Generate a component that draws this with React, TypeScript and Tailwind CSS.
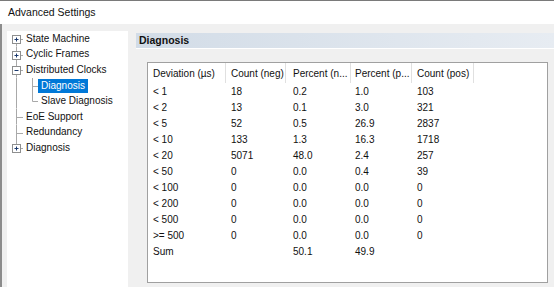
import React from 'react';

type Node = {
  label: string;
  level: 0 | 1;
  box?: 'plus' | 'minus';
  selected?: boolean;
  // vertical line through level-0 column: 'full' | 'down' | 'up'
  trunk: 'full' | 'down' | 'up';
  // child connector at level 1
  branch?: 'full' | 'up';
};

const tree: Node[] = [
  { label: 'State Machine', level: 0, box: 'plus', trunk: 'down' },
  { label: 'Cyclic Frames', level: 0, box: 'plus', trunk: 'full' },
  { label: 'Distributed Clocks', level: 0, box: 'minus', trunk: 'full' },
  { label: 'Diagnosis', level: 1, selected: true, trunk: 'full', branch: 'full' },
  { label: 'Slave Diagnosis', level: 1, trunk: 'full', branch: 'up' },
  { label: 'EoE Support', level: 0, trunk: 'full' },
  { label: 'Redundancy', level: 0, trunk: 'full' },
  { label: 'Diagnosis', level: 0, box: 'plus', trunk: 'up' },
];

const rows: string[][] = [
  ['< 1', '18', '0.2', '1.0', '103'],
  ['< 2', '13', '0.1', '3.0', '321'],
  ['< 5', '52', '0.5', '26.9', '2837'],
  ['< 10', '133', '1.3', '16.3', '1718'],
  ['< 20', '5071', '48.0', '2.4', '257'],
  ['< 50', '0', '0.0', '0.4', '39'],
  ['< 100', '0', '0.0', '0.0', '0'],
  ['< 200', '0', '0.0', '0.0', '0'],
  ['< 500', '0', '0.0', '0.0', '0'],
  ['>= 500', '0', '0.0', '0.0', '0'],
  ['Sum', '', '50.1', '49.9', ''],
];

const headers = ['Deviation (µs)', 'Count (neg)', 'Percent (n...', 'Percent (p...', 'Count (pos)'];
const pads = ['pl-[5px]', 'pl-[5px]', 'pl-[7px]', 'pl-[4px]', 'pl-[5px]'];

const LINE = '#a9a9a9';
const H = 15.6;
const CY = 7.8;

// connector lines + expand box drawn for one tree row
const TreeGlyph = ({ node }: { node: Node }) => {
  const w = node.level === 0 ? 16 : 31;
  const y1 = node.trunk === 'down' ? CY : 0;
  const y2 = node.trunk === 'up' ? CY : H;
  const c = Math.round(CY);
  return (
    <svg width={w} height={H} className="shrink-0">
      <line x1={9.5} y1={y1} x2={9.5} y2={y2} stroke={LINE} />
      {node.level === 0 && <line x1={9.5} y1={c + 0.5} x2={16} y2={c + 0.5} stroke={LINE} />}
      {node.level === 1 && (
        <>
          <line x1={25.5} y1={0} x2={25.5} y2={node.branch === 'up' ? c + 0.5 : H} stroke={LINE} />
          <line x1={25.5} y1={c + 0.5} x2={31} y2={c + 0.5} stroke={LINE} />
        </>
      )}
      {node.box && (
        <g>
          <rect x={5.5} y={c - 3.5} width={8} height={8} fill="#fff" stroke="#8e8f8f" />
          <line x1={7.5} y1={c + 0.5} x2={11.5} y2={c + 0.5} stroke="#1c3a6e" />
          {node.box === 'plus' && (
            <line x1={9.5} y1={c - 1.5} x2={9.5} y2={c + 2.5} stroke="#1c3a6e" />
          )}
        </g>
      )}
    </svg>
  );
};

export default function App() {
  return (
    <div
      className="w-[554px] h-[287px] overflow-hidden bg-[#f0f0f0] text-[#111] text-[10px] flex flex-col"
      style={{ fontFamily: '"Liberation Sans", Arial, sans-serif' }}
    >
      {/* Title bar */}
      <div className="h-[24px] shrink-0 bg-white border-t border-[#7a7a7a] flex items-center pl-[8px] text-[10.5px]">
        Advanced Settings
      </div>

      <div className="flex flex-1 min-h-0 pt-[7px] border-l-2 border-[#8c8c8c]">
        {/* Tree */}
        <div className="ml-[5px] w-[121px] bg-white">
          {tree.map((n, i) => (
            <div key={i} className="flex items-center h-[15.6px]">
              <TreeGlyph node={n} />
              <span
                className={`px-[3px] h-[14px] leading-[14px] whitespace-nowrap ${
                  n.selected ? 'bg-[#0078d7] text-white' : ''
                }`}
              >
                {n.label}
              </span>
            </div>
          ))}
        </div>

        {/* Right pane */}
        <div className="ml-[8px] flex-1 flex flex-col mt-[2px]">
          <div className="h-[15px] shrink-0 bg-gradient-to-r from-[#d2dce7] to-[#e7ecf2] flex items-center pl-[3px] font-bold text-[10.5px]">
            Diagnosis
          </div>
          <div className="h-[1px] bg-white" />
          <div className="flex-1 pt-[13px] pl-[11px] pr-[6px] pb-[4px] flex">
            <div className="flex-1 bg-white border border-[#a0a0a0]">
              <div className="grid grid-cols-[78px_60px_65px_61px_62px] h-[20px]">
                {headers.map((h, i) => (
                  <div
                    key={i}
                    className={`${pads[i]} flex items-center whitespace-nowrap border-r border-[#e0e0e0]`}
                  >
                    {h}
                  </div>
                ))}
              </div>
              {rows.map((r, ri) => (
                <div key={ri} className="grid grid-cols-[78px_60px_65px_61px_62px] h-[16.1px]">
                  {r.map((c, ci) => (
                    <div key={ci} className={`${pads[ci]} flex items-center whitespace-nowrap`}>
                      {c}
                    </div>
                  ))}
                </div>
              ))}
            </div>
          </div>
        </div>
      </div>
    </div>
  );
}
